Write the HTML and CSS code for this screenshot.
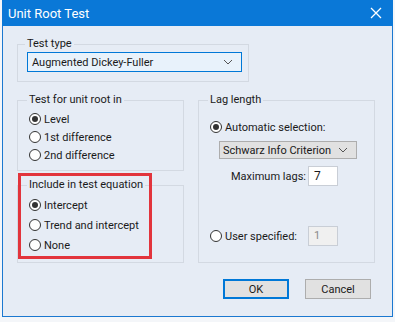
FILE: index.html
```html
<!DOCTYPE html>
<html lang="en">
<head>
    <meta charset="UTF-8">
    <title>Unit Root Test</title>
    <link rel="stylesheet" href="styles.css">
</head>
<body>
    <div class="window">
        <div class="titlebar">
            <span class="title">Unit Root Test</span>
            <svg class="close" width="12" height="12" viewBox="0 0 12 12">
                <path d="M1 1 L11 11 M11 1 L1 11" stroke="#fff" stroke-width="1.3" fill="none"/>
            </svg>
        </div>
        <div class="client">
            <fieldset class="grp grp-type">
                <legend>Test type</legend>
                <div class="combo combo-focus">
                    <span>Augmented Dickey-Fuller</span>
                    <svg width="10" height="6" viewBox="0 0 10 6"><path d="M1 1 L5 5 L9 1" stroke="#555" stroke-width="1" fill="none"/></svg>
                </div>
            </fieldset>

            <div class="row">
                <div class="col">
                    <fieldset class="grp grp-root">
                        <legend>Test for unit root in</legend>
                        <div class="opt"><span class="radio on"></span>Level</div>
                        <div class="opt"><span class="radio"></span>1st difference</div>
                        <div class="opt"><span class="radio"></span>2nd difference</div>
                    </fieldset>
                    <fieldset class="grp grp-eq">
                        <legend>Include in test equation</legend>
                        <div class="opt"><span class="radio on"></span>Intercept</div>
                        <div class="opt"><span class="radio"></span>Trend and intercept</div>
                        <div class="opt"><span class="radio"></span>None</div>
                    </fieldset>
                    <!-- annotation box -->
                    <div class="highlight"></div>
                </div>

                <fieldset class="grp grp-lag">
                    <legend>Lag length</legend>
                    <div class="opt opt-auto"><span class="radio on"></span>Automatic selection:</div>
                    <div class="combo combo-plain">
                        <span>Schwarz Info Criterion</span>
                        <svg width="10" height="6" viewBox="0 0 10 6"><path d="M1 1 L5 5 L9 1" stroke="#555" stroke-width="1" fill="none"/></svg>
                    </div>
                    <div class="field field-max">
                        <span class="field-label">Maximum lags:</span>
                        <span class="edit">7</span>
                    </div>
                    <div class="field field-user">
                        <span class="field-label"><span class="radio"></span>User specified:</span>
                        <span class="edit disabled">1</span>
                    </div>
                </fieldset>
            </div>

            <div class="buttons">
                <button class="btn btn-default">OK</button>
                <button class="btn">Cancel</button>
            </div>
        </div>
    </div>
</body>
</html>
```

FILE: styles.css
```css
body {
    margin: 0;
    width: 395px;
    height: 322px;
    overflow: hidden;
    background: #f4f6f9;
    font-family: Roboto, "Liberation Sans", Arial, sans-serif;
    font-size: 11px;
    color: #1a1a1a;
}
.window {
    width: 391px;
    height: 317px;
    margin-left: 2px;
    box-sizing: border-box;
    border: 1px solid #1b78d0;
    border-top: none;
    background: #e6ecf5;
}
.titlebar {
    height: 26px;
    margin: 0 -1px;
    background: #0a78d7;
    color: #fff;
    display: flex;
    align-items: center;
    justify-content: space-between;
    padding: 0 11px 0 6px;
}
.title {
    font-size: 13px;
}
.client {
    padding: 0 0 0 14px;
}
.grp {
    margin: 0;
    padding: 0 0 0 11px;
    border: 1px solid #d3d9e2;
    box-sizing: border-box;
    white-space: nowrap;
}
.grp legend {
    padding: 0 2px;
    margin-left: -2px;
    line-height: 16px;
}
.grp-type {
    margin-top: 10px;
    width: 232px;
    height: 46px;
    padding-left: 9px;
}
.combo {
    height: 20px;
    box-sizing: border-box;
    display: flex;
    align-items: center;
    justify-content: space-between;
    padding: 0 8px 0 4px;
}
.combo-focus {
    width: 215px;
    border: 1px solid #0078d7;
    background: #e8f2fb;
}
.row {
    display: flex;
    gap: 14px;
    margin-top: 10px;
}
.col {
    position: relative;
    width: 167px;
}
.grp-root {
    height: 79px;
    padding-top: 2px;
}
.grp-eq {
    margin-top: 6px;
    height: 86px;
    padding-top: 2px;
}
.opt {
    display: flex;
    align-items: center;
    height: 18px;
}
.grp-eq .opt {
    height: 20px;
}
.radio {
    width: 12px;
    height: 12px;
    box-sizing: border-box;
    border: 1px solid #333;
    border-radius: 50%;
    background: #fff;
    margin-right: 3px;
    position: relative;
    flex: none;
}
.radio.on::after {
    content: "";
    position: absolute;
    left: 2px;
    top: 2px;
    width: 6px;
    height: 6px;
    border-radius: 50%;
    background: #333;
}
.highlight {
    position: absolute;
    left: 1px;
    top: 81px;
    width: 134px;
    height: 86px;
    box-sizing: border-box;
    border: 3px solid #e2343c;
}
.grp-lag {
    width: 177px;
    height: 171px;
}
.opt-auto {
    margin-top: 10px;
}
.combo-plain {
    width: 138px;
    height: 18px;
    margin: 5px 0 0 9px;
    border: 1px solid #adadad;
    background: #e1e1e1;
    padding: 0 8px 0 3px;
}
.field {
    display: flex;
    align-items: center;
    height: 20px;
}
.field-label {
    display: flex;
    align-items: center;
    width: 98px;
}
.field-max {
    margin-top: 7px;
}
.field-max .field-label {
    padding-left: 21px;
    width: 77px;
}
.field-user {
    margin-top: 40px;
}
.edit {
    width: 30px;
    height: 20px;
    box-sizing: border-box;
    border: 1px solid #c9ced6;
    background: #fff;
    padding-left: 5px;
    line-height: 18px;
    font-size: 12px;
}
.edit.disabled {
    background: #f0f0f0;
    color: #8a8a8a;
    font-size: 11px;
}
.buttons {
    display: flex;
    justify-content: flex-end;
    gap: 16px;
    margin: 16px 21px 0 0;
}
.btn {
    width: 66px;
    height: 20px;
    box-sizing: border-box;
    border: 1px solid #adadad;
    background: #e1e1e1;
    font: inherit;
    color: #1a1a1a;
    padding: 0;
}
.btn-default {
    border: 2px solid #0078d7;
}
```
